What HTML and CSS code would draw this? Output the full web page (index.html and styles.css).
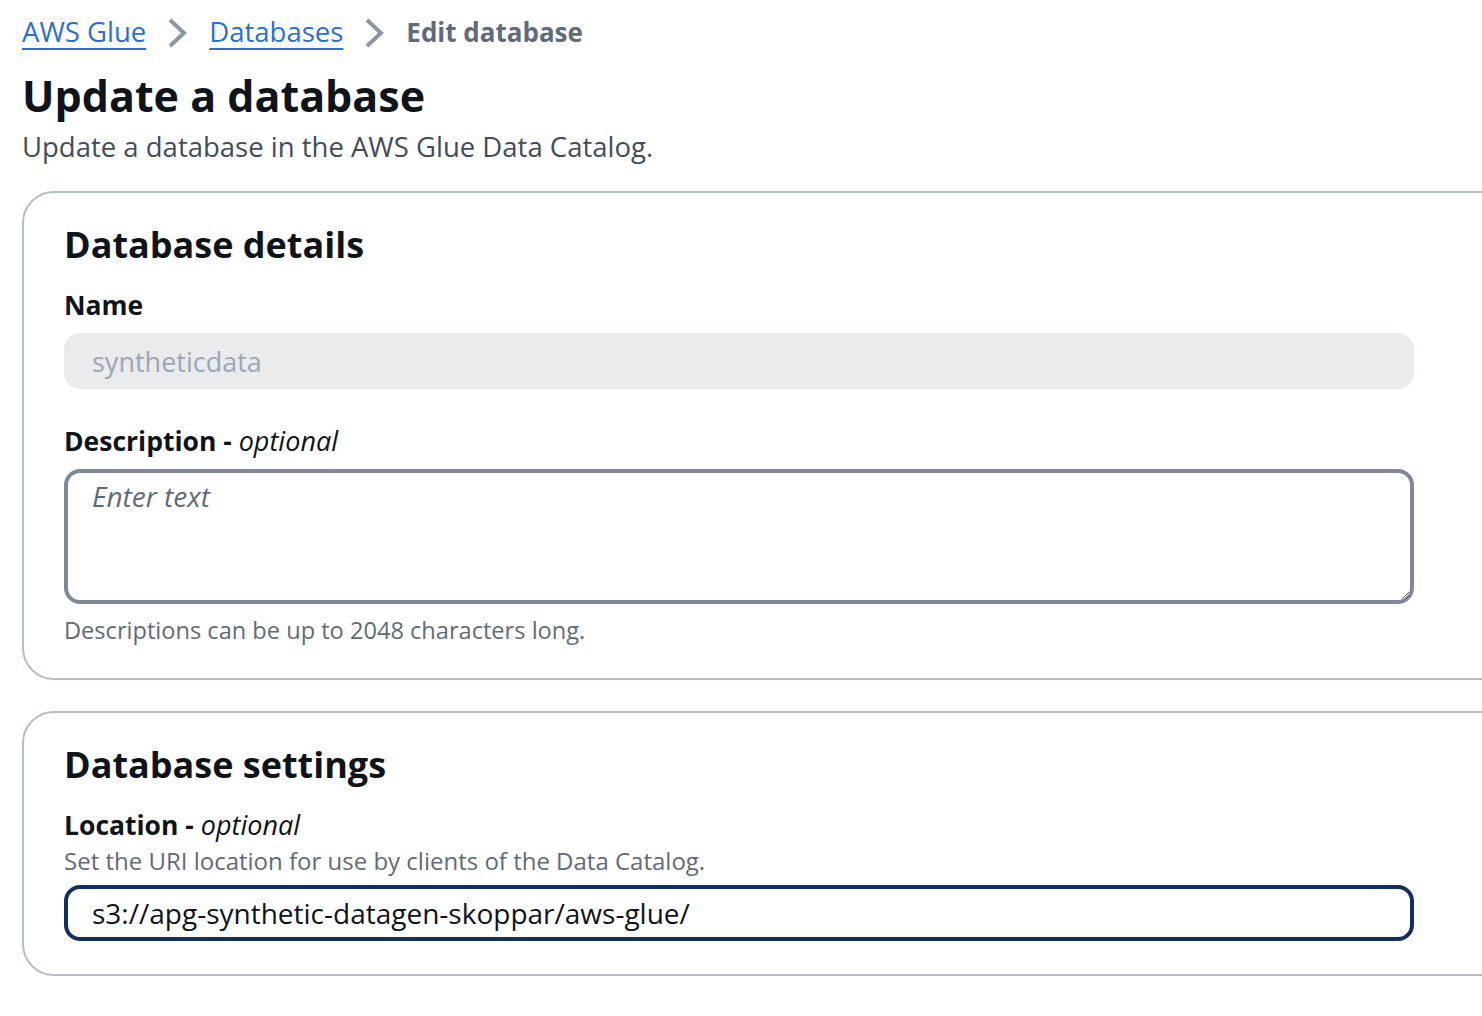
FILE: index.html
```html
<!DOCTYPE html>
<html lang="en">
<head>
<meta charset="utf-8">
<title>Update a database</title>
<link rel="stylesheet" href="styles.css">
</head>
<body>
<div class="page">
  <nav class="breadcrumbs">
    <a class="crumb-link" href="#">AWS Glue</a>
    <svg class="chevron" width="20" height="30" viewBox="0 0 20 30"><polyline points="3,2 17,15 3,28" fill="none" stroke="#8c96a3" stroke-width="4" stroke-linejoin="miter"/></svg>
    <a class="crumb-link" href="#">Databases</a>
    <svg class="chevron" width="20" height="30" viewBox="0 0 20 30"><polyline points="3,2 17,15 3,28" fill="none" stroke="#8c96a3" stroke-width="4" stroke-linejoin="miter"/></svg>
    <span class="crumb-current">Edit database</span>
  </nav>

  <h1 class="page-title">Update a database</h1>
  <p class="page-desc">Update a database in the AWS Glue Data Catalog.</p>

  <section class="card card-details">
    <h2 class="card-title">Database details</h2>
    <div class="field field-name">
      <label class="field-label">Name</label>
      <input class="input input-disabled" type="text" value="syntheticdata" disabled>
    </div>
    <div class="field field-desc">
      <label class="field-label">Description - <i class="opt">optional</i></label>
      <textarea class="textarea" placeholder="Enter text"></textarea>
      <div class="hint hint-below">Descriptions can be up to 2048 characters long.</div>
    </div>
  </section>

  <section class="card card-settings">
    <h2 class="card-title">Database settings</h2>
    <div class="field field-loc">
      <label class="field-label">Location - <i class="opt">optional</i></label>
      <div class="hint">Set the URI location for use by clients of the Data Catalog.</div>
      <input class="input input-focused" type="text" value="s3://apg-synthetic-datagen-skoppar/aws-glue/">
    </div>
  </section>
</div>
</body>
</html>
```

FILE: styles.css
```css
html, body {
  margin: 0;
  padding: 0;
  background: #ffffff;
  overflow: hidden;
}

body {
  font-family: "Open Sans", "Noto Sans", "Liberation Sans", sans-serif;
  color: #0f141a;
}

.page {
  padding: 12px 0 0 22px;
}

.breadcrumbs {
  display: flex;
  align-items: center;
  height: 40px;
  font-size: 27.5px;
  line-height: 40px;
}

.crumb-link {
  color: #2a6fd4;
  text-decoration: underline;
  text-decoration-thickness: 2px;
  text-underline-offset: 6px;
}

.chevron {
  display: block;
  margin: 2px 22px 0 21px;
}

.crumb-current {
  color: #5f6b7a;
  font-weight: 700;
  font-size: 26px;
}

.page-title {
  margin: 14px 0 0;
  font-size: 43px;
  line-height: 60px;
  font-weight: 700;
  color: #0f141a;
}

.page-desc {
  margin: 1px 0 0;
  font-size: 27.5px;
  line-height: 40px;
  color: #414d5c;
}

.card {
  width: 1500px;
  box-sizing: border-box;
  border: 2px solid #b6bec9;
  border-radius: 32px;
  padding: 30px 40px 32px 40px;
}

.card-details {
  margin-top: 24px;
}

.card-settings {
  margin-top: 31px;
  padding-bottom: 33px;
}

.card-title {
  margin: 0;
  font-size: 36px;
  line-height: 44px;
  font-weight: 700;
  color: #0f141a;
}

.field {
  display: flex;
  flex-direction: column;
  width: 1350px;
}

.field-name {
  margin-top: 18px;
}

.field-desc {
  margin-top: 32px;
}

.field-loc {
  margin-top: 18px;
}

.field-label {
  font-size: 26.5px;
  line-height: 40px;
  font-weight: 700;
  color: #0f141a;
}

.opt {
  font-weight: 400;
  font-size: 27px;
}

.input {
  box-sizing: border-box;
  width: 1350px;
  height: 56px;
  margin-top: 8px;
  padding: 0 24px;
  border-radius: 16px;
  font-family: inherit;
  font-size: 27px;
  line-height: 40px;
  outline: none;
}

.input-disabled {
  background: #e9ebed;
  border: 2px solid #e9ebed;
  padding-left: 26px;
  color: #9ba7b6;
  -webkit-text-fill-color: #9ba7b6;
  opacity: 1;
}

.input-focused {
  margin-top: 8px;
  border: 4px solid #13305a;
  background: #ffffff;
  color: #0f141a;
  font-size: 28px;
}

.textarea {
  box-sizing: border-box;
  width: 1350px;
  height: 135px;
  margin-top: 8px;
  padding: 3px 24px;
  border: 4px solid #7d8998;
  border-radius: 16px;
  font-family: inherit;
  font-size: 28px;
  line-height: 40px;
  outline: none;
  display: block;
}

.textarea::placeholder {
  color: #5f6b7a;
  font-style: italic;
  opacity: 1;
}

.hint {
  font-size: 24px;
  line-height: 32px;
  color: #5f6b7a;
}

.hint-below {
  margin-top: 10px;
  font-size: 23.6px;
}
```
